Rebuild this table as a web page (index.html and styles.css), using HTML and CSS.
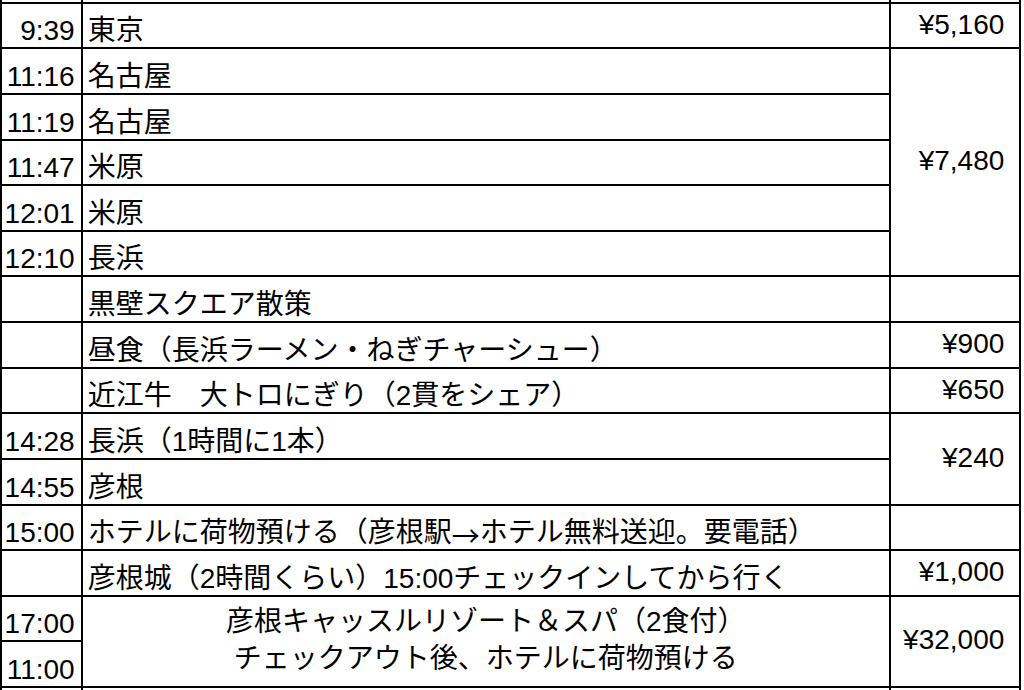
FILE: index.html
```html
<!DOCTYPE html>
<html lang="ja">
<head>
<meta charset="utf-8">
<title>旅程</title>
<link rel="stylesheet" href="styles.css">
</head>
<body>
<div class="sheet">
  <div class="c t edge"></div><div class="c p edge"></div><div class="c y edge"></div>

  <div class="c t">9:39</div><div class="c p">東京</div><div class="c y">¥5,160</div>
  <div class="c t">11:16</div><div class="c p">名古屋</div><div class="c y span5">¥7,480</div>
  <div class="c t">11:19</div><div class="c p">名古屋</div>
  <div class="c t">11:47</div><div class="c p">米原</div>
  <div class="c t">12:01</div><div class="c p">米原</div>
  <div class="c t">12:10</div><div class="c p">長浜</div>
  <div class="c t"></div><div class="c p">黒壁スクエア散策</div><div class="c y"></div>
  <div class="c t"></div><div class="c p">昼食（長浜ラーメン・ねぎチャーシュー）</div><div class="c y">¥900</div>
  <div class="c t"></div><div class="c p">近江牛　大トロにぎり（2貫をシェア）</div><div class="c y">¥650</div>
  <div class="c t">14:28</div><div class="c p">長浜（1時間に1本）</div><div class="c y span2">¥240</div>
  <div class="c t">14:55</div><div class="c p">彦根</div>
  <div class="c t">15:00</div><div class="c p">ホテルに荷物預ける（彦根駅<span class="ja">→</span>ホテル無料送迎。要電話）</div><div class="c y"></div>
  <div class="c t"></div><div class="c p">彦根城（2時間くらい）15:00チェックインしてから行く</div><div class="c y">¥1,000</div>
  <div class="c t">17:00</div>
  <div class="c p span2 center">
    <div class="line">彦根キャッスルリゾート＆スパ（2食付）</div>
    <div class="line">チェックアウト後、ホテルに荷物預ける</div>
  </div>
  <div class="c y span2">¥32,000</div>
  <div class="c t">11:00</div>

  <div class="c t edge"></div><div class="c p edge"></div><div class="c y edge"></div>
</div>
</body>
</html>
```

FILE: styles.css
```css
html, body {
  margin: 0;
  padding: 0;
  background: #ffffff;
  overflow: hidden;
}

.sheet {
  display: grid;
  grid-template-columns: 79px 806px 128.6px;
  grid-template-rows: 1.7px repeat(15, 43.64px) 1.7px;
  gap: 2px;
  padding: 0 2px 0 1.7px;
  width: fit-content;
  background: #000000;
  font-family: "Liberation Sans", "Noto Sans CJK JP", sans-serif;
  font-size: 28px;
  line-height: 32px;
  color: #000000;
}

.c {
  background: #ffffff;
  display: flex;
  white-space: nowrap;
}

.t {
  grid-column: 1;
  justify-content: flex-end;
  align-items: flex-end;
  padding: 0 6px 0 0;
}

.p {
  grid-column: 2;
  align-items: flex-end;
  padding: 0 0 0 5px;
}

.y {
  grid-column: 3;
  justify-content: flex-end;
  align-items: center;
  padding: 0 15px 2px 0;
}

.edge {
  padding: 0;
}

.ja {
  font-family: "Noto Sans CJK JP", sans-serif;
  line-height: 1;
}

.span5 {
  grid-row: span 5;
}

.span2 {
  grid-row: span 2;
}

.center {
  flex-direction: column;
  justify-content: center;
  align-items: center;
  line-height: 36.7px;
  padding: 0 0 1px 0;
}

.line {
  text-align: center;
}
```
